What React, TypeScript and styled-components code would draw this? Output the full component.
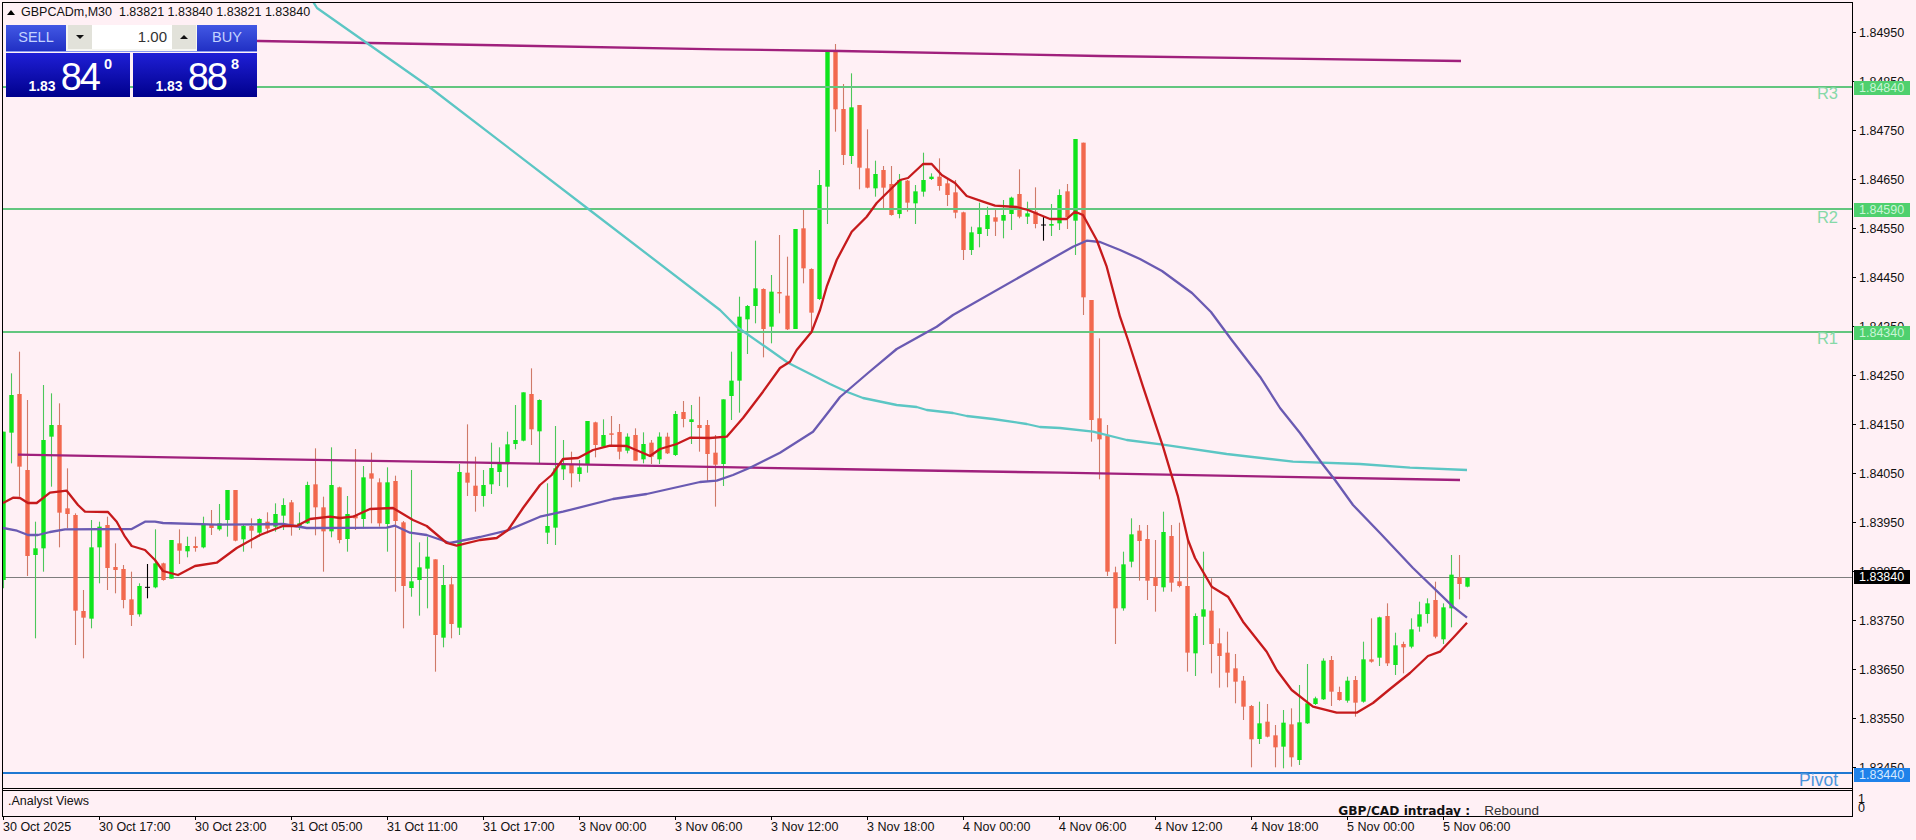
import React from "react";
import styled, { createGlobalStyle } from "styled-components";

type Candle = [number, number, number, number, number];
type Point = [number, number];

// kind, high, body top, body bottom, low, in thirds of a pixel from y = 340
// kind: 0 down, 1 up, 2 doji
const candles: Candle[] = [
  [1, 275, 275, 720, 745], [1, 100, 165, 278, 370], [0, 35, 162, 380, 470], [0, 180, 390, 648, 708],
  [1, 545, 625, 645, 895], [1, 135, 300, 625, 695], [1, 160, 255, 290, 440], [0, 190, 255, 518, 622],
  [0, 385, 505, 522, 565], [0, 520, 525, 812, 915], [0, 750, 813, 833, 955], [1, 540, 622, 836, 865],
  [1, 545, 560, 622, 730], [0, 530, 555, 684, 750], [0, 610, 681, 690, 760], [0, 675, 687, 780, 805],
  [0, 695, 778, 825, 858], [1, 730, 738, 823, 830], [2, 672, 742, 744, 775], [1, 568, 670, 742, 745],
  [0, 668, 670, 720, 722], [1, 600, 600, 716, 716], [0, 568, 610, 632, 672], [1, 590, 618, 634, 652],
  [0, 590, 618, 624, 635], [1, 530, 552, 622, 625], [0, 510, 552, 564, 585], [1, 492, 550, 568, 572],
  [1, 450, 450, 540, 590], [0, 450, 450, 602, 604], [1, 555, 558, 598, 635], [0, 535, 558, 572, 625],
  [1, 535, 537, 578, 590], [0, 517, 545, 566, 580], [1, 490, 522, 560, 575], [1, 475, 495, 527, 570],
  [0, 480, 487, 556, 587], [1, 517, 550, 558, 570], [1, 425, 435, 550, 552], [0, 325, 433, 502, 586],
  [0, 470, 502, 574, 695], [1, 322, 435, 574, 592], [0, 440, 442, 600, 610], [1, 468, 522, 597, 635],
  [0, 327, 525, 535, 570], [1, 378, 412, 537, 565], [0, 338, 400, 416, 550], [0, 415, 427, 550, 560],
  [1, 382, 427, 552, 635], [0, 407, 423, 543, 755], [0, 543, 547, 738, 865], [1, 390, 724, 744, 770],
  [1, 607, 682, 720, 827], [1, 590, 650, 686, 805], [0, 658, 658, 885, 995], [1, 675, 735, 893, 922],
  [0, 710, 733, 852, 895], [1, 372, 396, 863, 885], [0, 253, 398, 428, 468], [0, 350, 437, 468, 515],
  [1, 390, 435, 468, 500], [1, 308, 384, 433, 462], [1, 322, 368, 396, 438], [1, 275, 313, 367, 442],
  [1, 195, 300, 312, 328], [1, 157, 157, 302, 304], [0, 85, 162, 268, 315], [1, 178, 180, 274, 372],
  [1, 430, 558, 578, 612], [1, 258, 385, 563, 615], [1, 300, 375, 388, 420], [0, 335, 372, 400, 442],
  [1, 360, 382, 402, 425], [1, 243, 243, 375, 398], [0, 245, 247, 315, 352], [1, 238, 285, 320, 322],
  [0, 228, 280, 284, 320], [0, 252, 276, 335, 358], [1, 280, 290, 332, 340], [0, 265, 285, 362, 362],
  [1, 277, 312, 358, 370], [0, 300, 308, 350, 372], [1, 277, 290, 358, 372], [0, 278, 290, 340, 342],
  [1, 213, 222, 345, 348], [0, 183, 216, 237, 262], [1, 195, 238, 246, 312], [0, 170, 255, 264, 335],
  [0, 240, 255, 342, 425], [0, 285, 338, 374, 500], [1, 178, 178, 372, 438], [1, 35, 122, 168, 240],
  [1, -130, -70, 122, 218], [1, -105, -102, -62, 42], [1, -298, -155, -102, -50], [0, -155, -153, -33, 52],
  [1, -195, -145, -40, 10], [0, -315, -144, -140, -80], [0, -250, -133, -32, -30], [1, -333, -333, -33, -33],
  [0, -395, -335, -215, -170], [0, -215, -213, -82, -20], [1, -510, -465, -123, -120], [1, -868, -865, -460, -348],
  [0, -888, -868, -692, -625], [0, -768, -693, -555, -525], [1, -800, -698, -552, -528], [0, -705, -705, -517, -452],
  [0, -632, -515, -457, -455], [1, -538, -498, -455, -430], [0, -522, -510, -457, -395], [0, -522, -468, -375, -373],
  [1, -498, -480, -378, -365], [0, -480, -478, -412, -385], [1, -465, -446, -410, -348], [1, -562, -480, -445, -430],
  [1, -500, -490, -483, -480], [0, -545, -490, -462, -448], [0, -485, -470, -435, -402], [0, -480, -443, -382, -365],
  [0, -385, -383, -270, -240], [1, -340, -323, -270, -255], [1, -412, -338, -318, -278], [1, -400, -375, -333, -312],
  [0, -395, -368, -355, -312], [1, -420, -375, -358, -305], [1, -430, -427, -378, -330], [0, -512, -438, -370, -365],
  [1, -415, -380, -370, -348], [0, -458, -385, -348, -335], [2, -370, -345, -343, -298], [1, -408, -348, -343, -312],
  [1, -452, -435, -350, -330], [0, -468, -446, -368, -333], [1, -603, -603, -358, -255], [0, -592, -592, -128, -75],
  [0, -120, -120, 240, 305], [0, -5, 235, 298, 418], [0, 255, 288, 695, 708], [0, 680, 697, 805, 912],
  [1, 635, 673, 805, 812], [1, 535, 583, 665, 682], [0, 555, 572, 603, 722], [0, 555, 597, 722, 780],
  [0, 600, 712, 738, 815], [1, 515, 576, 742, 755], [0, 555, 588, 728, 755], [0, 548, 724, 738, 742],
  [0, 590, 738, 938, 995], [1, 820, 828, 940, 1008], [1, 635, 808, 830, 915], [0, 715, 812, 912, 1000],
  [0, 865, 910, 948, 1043], [0, 875, 938, 998, 1042], [0, 942, 985, 1025, 1090], [0, 1008, 1022, 1100, 1140],
  [0, 1095, 1098, 1198, 1282], [1, 1085, 1150, 1197, 1212], [0, 1092, 1145, 1190, 1192], [0, 1155, 1186, 1222, 1282],
  [1, 1110, 1148, 1220, 1285], [0, 1105, 1153, 1252, 1280], [1, 1035, 1147, 1260, 1275], [1, 972, 1090, 1150, 1152],
  [1, 1070, 1075, 1092, 1095], [1, 955, 962, 1078, 1080], [0, 948, 960, 1055, 1098], [0, 1040, 1056, 1080, 1082],
  [1, 1010, 1022, 1082, 1088], [0, 1008, 1020, 1088, 1130], [1, 905, 958, 1085, 1088], [0, 835, 958, 965, 968],
  [1, 830, 832, 953, 978], [0, 790, 828, 970, 978], [1, 878, 916, 975, 1005], [0, 905, 912, 922, 1000],
  [1, 835, 868, 920, 925], [1, 785, 823, 860, 875], [1, 775, 790, 822, 850], [0, 725, 780, 890, 895],
  [1, 790, 802, 898, 912], [1, 645, 704, 805, 862], [0, 645, 712, 732, 778], [1, 712, 713, 740, 742],
];

const redLine: Point[] = [
  [3, 503], [13, 497.7], [20, 498], [28, 503], [36.7, 503], [50, 492.7], [66.7, 490.7], [78, 505], [85, 511.7],
  [108, 512], [116.7, 521.7], [125, 536.7], [131.7, 546], [145, 550], [155, 560], [163, 571], [178, 575], [195, 566],
  [216.7, 562.7], [236.7, 548], [260, 535], [283, 526], [296.7, 526], [310, 519], [330, 516.7], [340, 518], [353, 516.7],
  [370, 509], [393, 508], [413, 520], [426.7, 526], [446.7, 543], [456.7, 545.7], [480, 540], [496.7, 538], [508, 530],
  [523, 508], [540, 485], [551.7, 475], [563, 459], [578, 458], [593, 450], [610, 445.7], [626.7, 446], [650, 456],
  [660, 449], [676.7, 444], [690, 437.7], [710, 438], [726.7, 436.7], [743, 418], [763, 391.7], [780, 368], [790, 361.7],
  [796.7, 350], [811.7, 331.7], [820, 310], [826.7, 286.7], [836.7, 260], [851.7, 231.7], [866.7, 216.7], [876.7, 203],
  [900, 180], [908, 178], [923, 164], [931.7, 164], [941.7, 175], [955, 183], [966.7, 196], [983, 201.7], [995, 205.7],
  [1016.7, 207], [1028, 210], [1050, 219], [1066.7, 219], [1075, 211.7], [1083, 215], [1096.7, 240], [1106.7, 266.7],
  [1120, 316.7], [1128, 340], [1143, 386.7], [1163, 446.7], [1178, 496.7], [1188, 540], [1195, 558], [1211.7, 586.7],
  [1228, 596.7], [1243, 621.7], [1266.7, 651.7], [1276.7, 670], [1291.7, 690], [1313, 706.7], [1336.7, 712.7],
  [1356.7, 712.7], [1373, 703], [1390, 689], [1410, 673], [1428, 656], [1440, 651.7], [1453, 638], [1467, 622.7],
];

const slateLine: Point[] = [
  [3, 528], [17, 530.7], [28, 535], [38, 535], [50, 532], [65, 529.3], [131.7, 529], [145, 521.7], [155, 521.7],
  [163, 523], [216.7, 524.7], [283, 524], [306.7, 528], [386.7, 527.7], [395, 525.7], [410, 532.7], [426.7, 535],
  [450, 543], [480, 537], [506.7, 530.7], [540, 516.7], [563, 511.7], [613, 499], [646.7, 494], [700, 482], [716.7, 480.7],
  [733, 475], [750, 467.7], [780, 452.7], [813, 431.7], [830, 410], [840, 397], [868, 373], [896.7, 349], [936.7, 326.7],
  [953, 315], [1073, 246.7], [1086.7, 240.7], [1100, 242], [1120, 250], [1140, 259], [1162, 271], [1192, 293], [1211, 312],
  [1231.7, 340], [1260, 376.7], [1280, 408], [1300, 433], [1321.7, 463], [1335, 480], [1353, 505], [1380, 533], [1413, 568],
  [1453, 606.7], [1467, 617.7],
];

const tealLine: Point[] = [
  [312, 0], [317, 8], [428, 86], [587, 208], [720, 310], [736.7, 326.7], [770, 350], [788, 362.7], [830, 384],
  [846.7, 391.7], [863, 398], [896.7, 405], [916.7, 407], [926.7, 410], [953, 413], [966.7, 416], [993, 419],
  [1026.7, 424], [1040, 427], [1060, 428], [1093, 431.7], [1126.7, 440], [1163, 444.7], [1226.7, 454], [1293, 461.7],
  [1360, 464], [1410, 467.7], [1467, 470],
];

const upperPurple: Point[] = [[19, 37], [259, 41], [720, 49.3], [840, 51], [1100, 56], [1461, 61]];
const lowerPurple: Point[] = [[18, 454.7], [480, 462.7], [830, 469], [1060, 472.7], [1460, 480]];

const levels = [
  { name: "R3", price: "1.84840", y: 87, textY: 81, tagY: 79 },
  { name: "R2", price: "1.84590", y: 209, textY: 205, tagY: 201 },
  { name: "R1", price: "1.84340", y: 332, textY: 326, tagY: 324 },
];

const scalePrices = Array.from({ length: 16 }, (_, i) => (1.8495 - i * 0.001).toFixed(5));

const timeLabels = [
  "30 Oct 2025", "30 Oct 17:00", "30 Oct 23:00", "31 Oct 05:00", "31 Oct 11:00", "31 Oct 17:00",
  "3 Nov 00:00", "3 Nov 06:00", "3 Nov 12:00", "3 Nov 18:00", "4 Nov 00:00", "4 Nov 06:00",
  "4 Nov 12:00", "4 Nov 18:00", "5 Nov 00:00", "5 Nov 06:00",
];

const toPoints = (line: Point[]) => line.map(([x, y]) => `${x},${y}`).join(" ");

const bodyColors = ["#f2684e", "#0fe41c", "#000000"];
const wickColors = ["#cf7a68", "#4cc75a", "#000000"];

const GlobalStyle = createGlobalStyle`
  html, body {
    margin: 0;
    background: #fff0f5;
  }
`;

const Page = styled.div`
  width: 1916px;
  height: 840px;
  padding: 2px 0 0 2px;
  box-sizing: border-box;
  overflow: hidden;
  background: #fff0f5;
  color: #111;
  font-family: "Liberation Sans", Arial, sans-serif;
  font-size: 12.5px;
`;

const ChartRow = styled.div`
  display: flex;
  height: 815px;
`;

const ChartPane = styled.div`
  width: 1849px;
  border: 1px solid #000;
  display: flex;
  flex-direction: column;
`;

const MainWindow = styled.div`
  position: relative;
  height: 785px;
  border-bottom: 1px solid #000;
  flex: none;
  overflow: hidden;
`;

const ChartSvg = styled.svg`
  display: block;
`;

const SymbolHeader = styled.div`
  position: absolute;
  left: 4px;
  top: 0;
  height: 18px;
  display: flex;
  align-items: center;
  white-space: pre;
`;

const CollapseArrow = styled.span`
  width: 0;
  height: 0;
  margin-right: 6px;
  border-left: 4px solid transparent;
  border-right: 4px solid transparent;
  border-bottom: 5px solid #000;
`;

const TradePanel = styled.div`
  position: absolute;
  left: 3px;
  top: 22px;
  width: 251px;
`;

const PanelTop = styled.div`
  display: flex;
  height: 27px;
  background: linear-gradient(#4258e4, #2130c4);
  border-bottom: 1px solid #8b9af0;
  box-sizing: border-box;
`;

const SideButton = styled.div`
  width: 60px;
  flex: none;
  display: flex;
  align-items: center;
  justify-content: center;
  padding-bottom: 2px;
  box-sizing: border-box;
  color: #c3d2ff;
  font-size: 14.5px;
`;

const LotBox = styled.div`
  flex: 1;
  height: 26px;
  display: flex;
  padding: 0 1px 2px 2px;
  background: #f6f6f1;
  box-sizing: border-box;
`;

const LotStep = styled.div`
  width: 24px;
  flex: none;
  display: flex;
  align-items: center;
  justify-content: center;
  background: #e2e2da;
`;

const StepCaret = styled.span<{ $up?: boolean }>`
  width: 0;
  height: 0;
  border-left: 4px solid transparent;
  border-right: 4px solid transparent;
  ${(p) => (p.$up ? "border-bottom: 4px solid #111;" : "border-top: 4px solid #111;")}
`;

const LotValue = styled.div`
  flex: 1;
  background: #fff;
  color: #333;
  font-size: 15px;
  line-height: 24px;
  text-align: right;
  padding-right: 5px;
`;

const PriceRow = styled.div`
  display: grid;
  grid-template-columns: 124px 124px;
  gap: 3px;
  margin-top: 1px;
`;

const PriceBox = styled.div`
  height: 44px;
  display: flex;
  justify-content: flex-end;
  align-items: flex-end;
  padding-right: 18px;
  background: linear-gradient(#1f1fd6, #00008c);
  color: #fff;
  overflow: hidden;
`;

const PriceHandle = styled.span`
  font-size: 14px;
  font-weight: 700;
  line-height: 21px;
  margin-right: 5px;
`;

const PriceBig = styled.span`
  font-size: 38px;
  line-height: 39px;
  letter-spacing: -2px;
  margin-right: 5px;
`;

const PricePoint = styled.span`
  align-self: flex-start;
  font-size: 14.5px;
  font-weight: 700;
  line-height: 16px;
  margin-top: 3px;
`;

const LevelLabel = styled.div<{ $y: number; $color: string; $size: number }>`
  position: absolute;
  right: 14px;
  top: ${(p) => p.$y}px;
  font-size: ${(p) => p.$size}px;
  line-height: 18px;
  color: ${(p) => p.$color};
`;

const SubWindow = styled.div`
  flex: 1;
  margin-top: 1px;
  border-top: 1px solid #000;
  display: flex;
  overflow: hidden;
  padding-left: 5px;
`;

const SubTitle = styled.div`
  line-height: 21px;
`;

const IntradayNote = styled.div`
  margin: 12px 313px 0 auto;
  display: flex;
  gap: 14px;
  line-height: 16px;
`;

const NoteTitle = styled.span`
  font-family: "DejaVu Sans", Verdana, sans-serif;
  font-size: 12.2px;
  font-weight: 700;
`;

const NoteValue = styled.span`
  font-size: 13.5px;
  color: #333;
`;

const ScalePane = styled.div`
  position: relative;
  flex: 1;
`;

const PriceScale = styled.div`
  height: 788px;
  padding-top: 6px;
  box-sizing: border-box;
  overflow: hidden;
`;

const ScaleRow = styled.div`
  height: 49px;
  display: flex;
  align-items: center;

  &::before {
    content: "";
    width: 3px;
    height: 1px;
    margin-right: 3px;
    background: #000;
  }
`;

const PriceTag = styled.div<{ $y: number; $bg: string; $color: string }>`
  position: absolute;
  left: 1px;
  top: ${(p) => p.$y}px;
  width: 56px;
  height: 14px;
  padding-left: 5px;
  box-sizing: border-box;
  line-height: 14px;
  background: ${(p) => p.$bg};
  color: ${(p) => p.$color};
`;

const SubScale = styled.div`
  padding: 5px 0 0 5px;
  line-height: 9px;
`;

const TimeAxis = styled.div`
  display: flex;
  padding-left: 1px;
`;

const TimeCell = styled.div`
  width: 96px;
  flex: none;
  white-space: nowrap;
  line-height: 15px;

  &::before {
    content: "";
    display: block;
    width: 1px;
    height: 3px;
    background: #000;
  }
`;

const PriceChart: React.FC = () => (
  <ChartSvg width={1849} height={785} viewBox="3 3 1849 785">
    <line x1={3} y1={577.5} x2={1852} y2={577.5} stroke="#7d7d7d" strokeWidth={1} />
    {candles.map(([kind, high, top, bottom, low], i) => {
      const x = 3.5 + 8 * i;
      const y = (v: number) => 340 + v / 3;
      return (
        <g key={i}>
          <line x1={x} y1={y(high)} x2={x} y2={y(low)} stroke={wickColors[kind]} strokeWidth={1.1} />
          {kind === 2 ? (
            <line x1={x - 2.5} y1={y(top)} x2={x + 2.5} y2={y(top)} stroke="#000" strokeWidth={1} />
          ) : (
            <rect x={x - 2.2} y={y(top)} width={4.4} height={Math.max((bottom - top) / 3, 1.5)} fill={bodyColors[kind]} />
          )}
        </g>
      );
    })}
    {levels.map((level) => (
      <line key={level.name} x1={3} y1={level.y} x2={1852} y2={level.y} stroke="#63c67f" strokeWidth={2} />
    ))}
    <line x1={3} y1={773} x2={1852} y2={773} stroke="#1f78d2" strokeWidth={2} />
    <g fill="none" strokeWidth={2.3} strokeLinejoin="round">
      <polyline points={toPoints(upperPurple)} stroke="#a0207c" />
      <polyline points={toPoints(lowerPurple)} stroke="#a0207c" />
      <polyline points={toPoints(tealLine)} stroke="#5cc6c4" />
      <polyline points={toPoints(slateLine)} stroke="#6a5ab2" />
      <polyline points={toPoints(redLine)} stroke="#c61a1c" />
    </g>
  </ChartSvg>
);

const App: React.FC = () => (
  <Page>
    <GlobalStyle />
    <ChartRow>
      <ChartPane>
        <MainWindow>
          <PriceChart />
          <SymbolHeader>
            <CollapseArrow />
            {"GBPCADm,M30  1.83821 1.83840 1.83821 1.83840"}
          </SymbolHeader>
          <TradePanel>
            <PanelTop>
              <SideButton>SELL</SideButton>
              <LotBox>
                <LotStep>
                  <StepCaret />
                </LotStep>
                <LotValue>1.00</LotValue>
                <LotStep>
                  <StepCaret $up />
                </LotStep>
              </LotBox>
              <SideButton>BUY</SideButton>
            </PanelTop>
            <PriceRow>
              <PriceBox>
                <PriceHandle>1.83</PriceHandle>
                <PriceBig>84</PriceBig>
                <PricePoint>0</PricePoint>
              </PriceBox>
              <PriceBox>
                <PriceHandle>1.83</PriceHandle>
                <PriceBig>88</PriceBig>
                <PricePoint>8</PricePoint>
              </PriceBox>
            </PriceRow>
          </TradePanel>
          {levels.map((level) => (
            <LevelLabel key={level.name} $y={level.textY} $color="#86d9a8" $size={16.5}>
              {level.name}
            </LevelLabel>
          ))}
          <LevelLabel $y={768} $color="#4a93dc" $size={17.5}>
            Pivot
          </LevelLabel>
        </MainWindow>
        <SubWindow>
          <SubTitle>.Analyst Views</SubTitle>
          <IntradayNote>
            <NoteTitle>GBP/CAD intraday :</NoteTitle>
            <NoteValue>Rebound</NoteValue>
          </IntradayNote>
        </SubWindow>
      </ChartPane>
      <ScalePane>
        <PriceScale>
          {scalePrices.map((price) => (
            <ScaleRow key={price}>{price}</ScaleRow>
          ))}
        </PriceScale>
        <SubScale>
          1<br />0
        </SubScale>
        {levels.map((level) => (
          <PriceTag key={level.name} $y={level.tagY} $bg="#4fd06e" $color="#c9f5d6">
            {level.price}
          </PriceTag>
        ))}
        <PriceTag $y={568} $bg="#000" $color="#fff">
          1.83840
        </PriceTag>
        <PriceTag $y={766} $bg="#1f82ea" $color="#d4e9ff">
          1.83440
        </PriceTag>
      </ScalePane>
    </ChartRow>
    <TimeAxis>
      {timeLabels.map((label) => (
        <TimeCell key={label}>{label}</TimeCell>
      ))}
    </TimeAxis>
  </Page>
);

export default App;
